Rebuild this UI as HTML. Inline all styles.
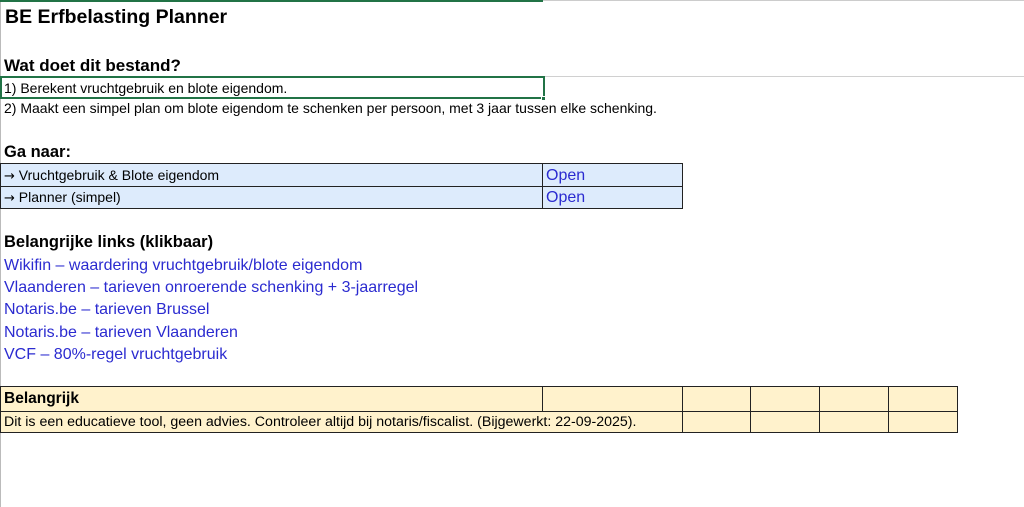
<!DOCTYPE html>
<html><head><meta charset="utf-8"><style>
body{margin:0;width:1024px;height:507px;background:#fff;position:relative;overflow:hidden;font-family:"Liberation Sans",sans-serif;color:#000}
.a{position:absolute;white-space:nowrap}
.b{font-weight:bold}
.c{position:absolute;box-sizing:border-box}
.l{color:#2b2bd0;font-size:16px}
.ar{font-family:"DejaVu Sans",sans-serif;font-size:13px}
</style></head><body>
<div class="c" style="left:0;top:0;width:1px;height:507px;background:#bbb"></div>
<div class="c" style="left:0;top:0;width:543px;height:2px;background:#217346"></div>
<div class="c" style="left:543px;top:0;width:481px;height:1px;background:#ccc"></div>
<div class="c" style="left:543px;top:76px;width:481px;height:1px;background:#d0d0d0"></div>
<div class="a b" style="left:5px;top:6px;font-size:19.5px">BE Erfbelasting Planner</div>
<div class="a b" style="left:4px;top:56px;font-size:17px">Wat doet dit bestand?</div>
<div class="c" style="left:0;top:76px;width:545px;height:23px;border:2px solid #217346"></div>
<div class="c" style="left:541px;top:96px;width:5px;height:5px;background:#217346;border:1px solid #fff"></div>
<div class="a" style="left:4px;top:80px;font-size:14px">1) Berekent vruchtgebruik en blote eigendom.</div>
<div class="a" style="left:4px;top:100px;font-size:14px">2) Maakt een simpel plan om blote eigendom te schenken per persoon, met 3 jaar tussen elke schenking.</div>
<div class="a b" style="left:4px;top:143px;font-size:16.5px">Ga naar:</div>
<div class="c" style="left:0;top:163px;width:683px;height:46px;background:#ddebfc;border:1px solid #222"></div>
<div class="c" style="left:0;top:186px;width:683px;height:1px;background:#222"></div>
<div class="c" style="left:542px;top:163px;width:1px;height:46px;background:#222"></div>
<div class="a" style="left:4px;top:167px;font-size:14px"><span class="ar">→</span> Vruchtgebruik &amp; Blote eigendom</div>
<div class="a" style="left:4px;top:189px;font-size:14px"><span class="ar">→</span> Planner (simpel)</div>
<div class="a l" style="left:546px;top:167px">Open</div>
<div class="a l" style="left:546px;top:189px">Open</div>
<div class="a b" style="left:4px;top:233px;font-size:16.5px">Belangrijke links (klikbaar)</div>
<div class="a l" style="left:4px;top:257px">Wikifin – waardering vruchtgebruik/blote eigendom</div>
<div class="a l" style="left:4px;top:279px">Vlaanderen – tarieven onroerende schenking + 3-jaarregel</div>
<div class="a l" style="left:4px;top:301px">Notaris.be – tarieven Brussel</div>
<div class="a l" style="left:4px;top:324px">Notaris.be – tarieven Vlaanderen</div>
<div class="a l" style="left:4px;top:346px">VCF – 80%-regel vruchtgebruik</div>
<div class="c" style="left:0;top:386px;width:958px;height:47px;background:#fff2cc;border:1px solid #222"></div>
<div class="c" style="left:0;top:411px;width:958px;height:1px;background:#222"></div>
<div class="c" style="left:542px;top:386px;width:1px;height:25px;background:#222"></div>
<div class="c" style="left:682px;top:386px;width:1px;height:47px;background:#222"></div>
<div class="c" style="left:750px;top:386px;width:1px;height:47px;background:#222"></div>
<div class="c" style="left:819px;top:386px;width:1px;height:47px;background:#222"></div>
<div class="c" style="left:888px;top:386px;width:1px;height:47px;background:#222"></div>
<div class="a b" style="left:4px;top:390px;font-size:15.5px">Belangrijk</div>
<div class="a" style="left:4px;top:414px;font-size:14.2px">Dit is een educatieve tool, geen advies. Controleer altijd bij notaris/fiscalist. (Bijgewerkt: 22-09-2025).</div>
</body></html>
